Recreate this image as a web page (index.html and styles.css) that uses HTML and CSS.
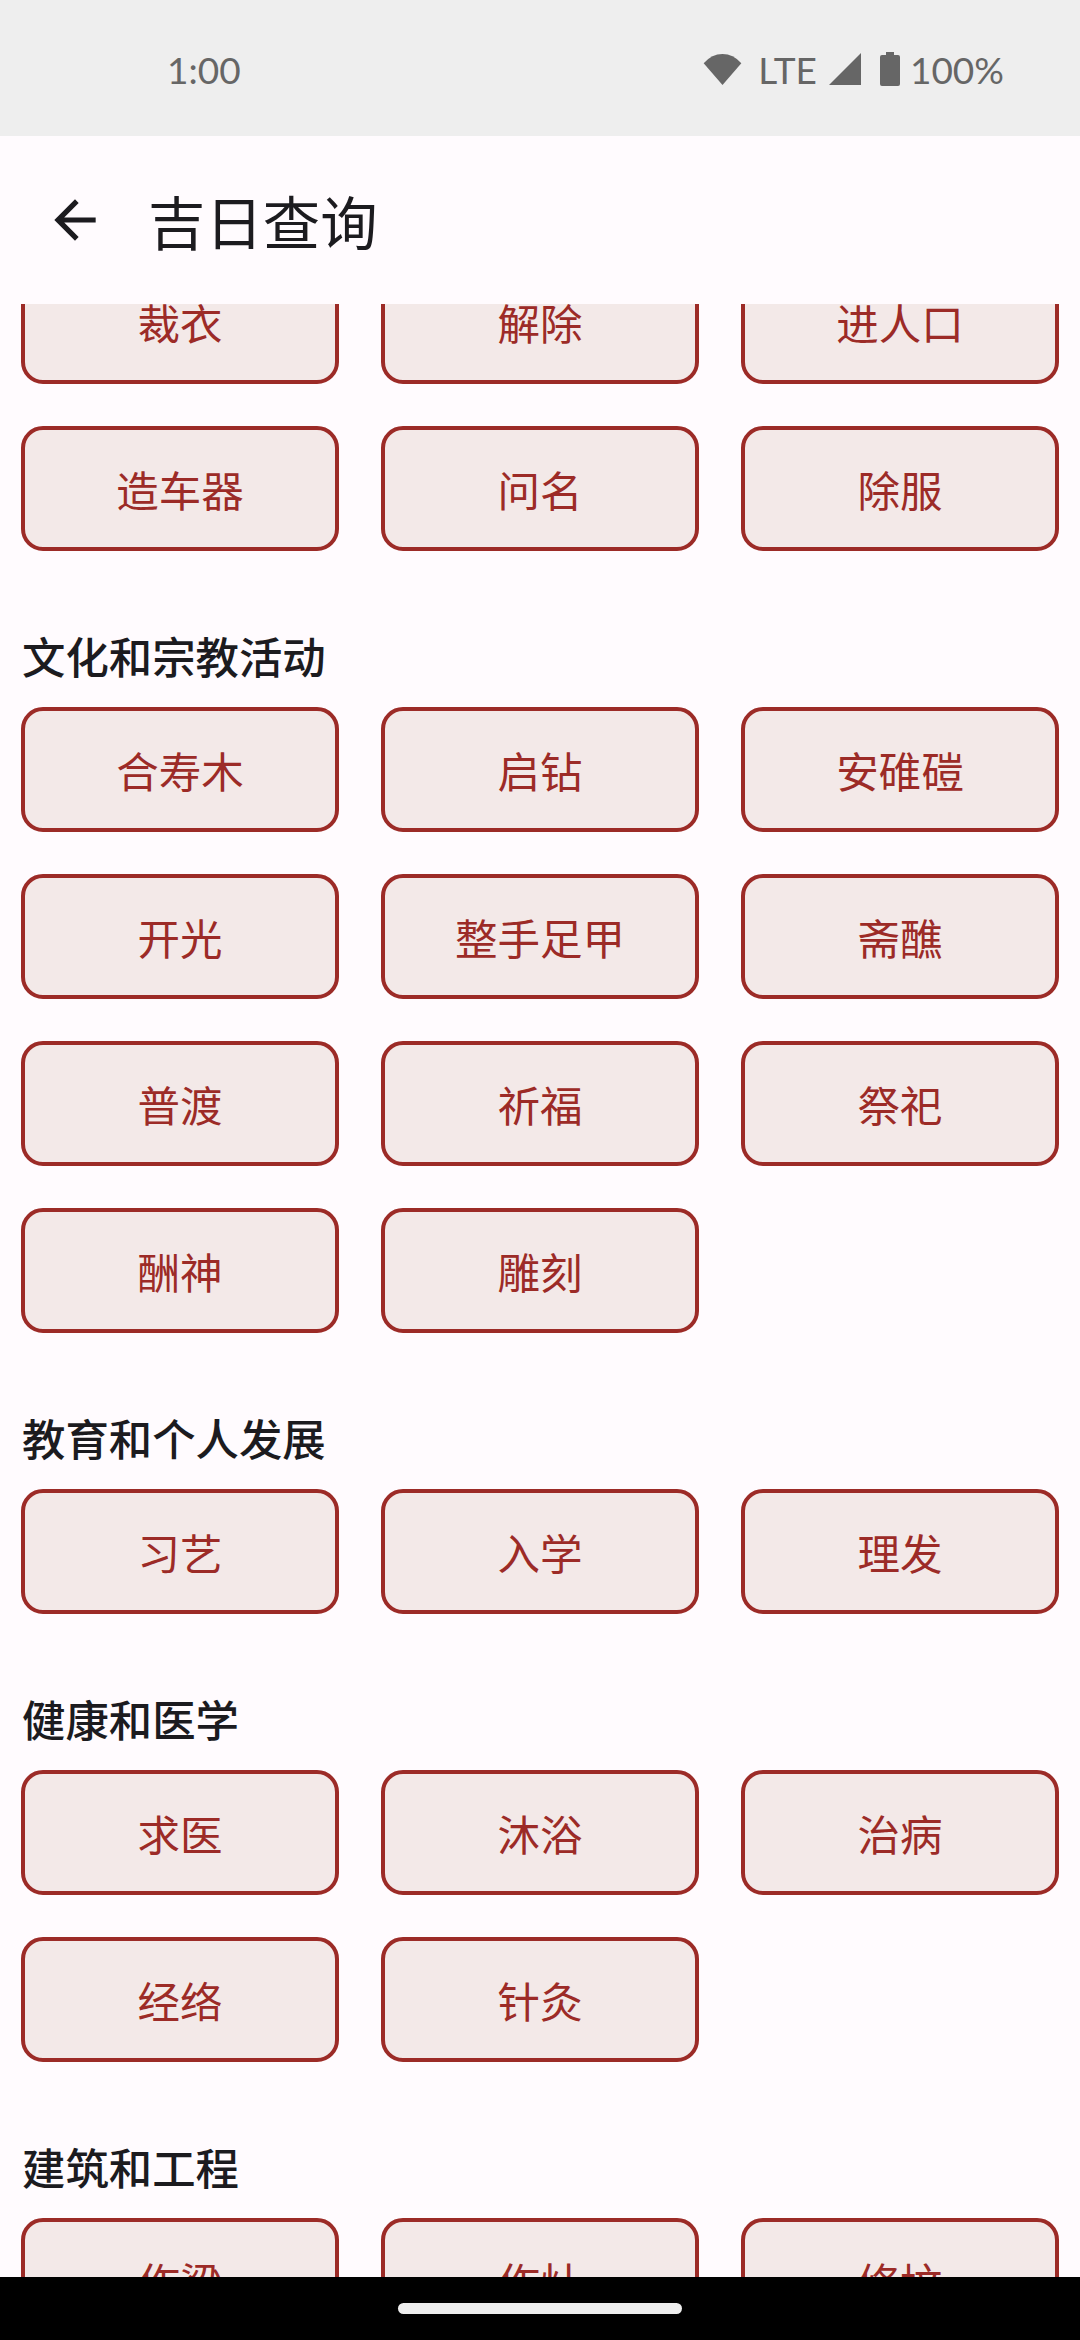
FILE: index.html
```html
<!DOCTYPE html>
<html lang="zh-CN">
<head>
  <meta charset="UTF-8" />
  <meta name="viewport" content="width=device-width, initial-scale=1.0"/>
  <title>吉日查询</title>
  <link rel="stylesheet" href="styles.css">
</head>
<body>

  <div class="status-bar">
    <span class="clock">1:00</span>
    <div class="status-icons">
      <svg class="wifi-icon" viewBox="0 0 40 34"><path d="M20 33 L0.6 10.5 Q9 1 20 1 Q31 1 39.4 10.5 Z"/></svg>
      <span class="lte">LTE</span>
      <svg class="signal-icon" viewBox="0 0 32 32"><path d="M32 0 V32 H0 Z"/></svg>
      <svg class="battery-icon" viewBox="0 0 20 34"><path d="M6 0 H14 V3 H18 Q20 3 20 5 V32 Q20 34 18 34 H2 Q0 34 0 32 V5 Q0 3 2 3 H6 Z"/></svg>
      <span class="percent">100%</span>
    </div>
  </div>

  <header class="app-bar">
    <svg class="back-icon" viewBox="0 0 24 24"><path d="M20 11H7.83l5.59-5.59L12 4l-8 8 8 8 1.41-1.41L7.83 13H20v-2z"/></svg>
    <h1>吉日查询</h1>
  </header>

  <main class="scroll-area">
    <div class="scroll-content">

      <section class="group">
        <div class="chips">
          <button class="chip">裁衣</button>
          <button class="chip">解除</button>
          <button class="chip">进人口</button>
          <button class="chip">造车器</button>
          <button class="chip">问名</button>
          <button class="chip">除服</button>
        </div>
      </section>

      <section class="group">
        <h2>文化和宗教活动</h2>
        <div class="chips">
          <button class="chip">合寿木</button>
          <button class="chip">启钻</button>
          <button class="chip">安碓磑</button>
          <button class="chip">开光</button>
          <button class="chip">整手足甲</button>
          <button class="chip">斋醮</button>
          <button class="chip">普渡</button>
          <button class="chip">祈福</button>
          <button class="chip">祭祀</button>
          <button class="chip">酬神</button>
          <button class="chip">雕刻</button>
        </div>
      </section>

      <section class="group">
        <h2>教育和个人发展</h2>
        <div class="chips">
          <button class="chip">习艺</button>
          <button class="chip">入学</button>
          <button class="chip">理发</button>
        </div>
      </section>

      <section class="group">
        <h2>健康和医学</h2>
        <div class="chips">
          <button class="chip">求医</button>
          <button class="chip">沐浴</button>
          <button class="chip">治病</button>
          <button class="chip">经络</button>
          <button class="chip">针灸</button>
        </div>
      </section>

      <section class="group">
        <h2>建筑和工程</h2>
        <div class="chips">
          <button class="chip">作梁</button>
          <button class="chip">作灶</button>
          <button class="chip">修坟</button>
        </div>
      </section>

    </div>
  </main>

  <div class="nav-bar">
    <div class="nav-handle"></div>
  </div>

</body>
</html>
```

FILE: styles.css
```css
* {
  box-sizing: border-box;
}

html, body {
  margin: 0;
  height: 2340px;
}

body {
  display: flex;
  flex-direction: column;
  overflow: hidden;
  font-family: "Noto Sans CJK SC", "Noto Sans", sans-serif;
  background-color: #fffbfe;
}

.status-bar {
  flex: 0 0 136px;
  display: flex;
  align-items: center;
  justify-content: space-between;
  padding: 2px 76px 0 167px;
  background-color: #eeeeee;
  color: #666666;
  font-family: Lato, Roboto, sans-serif;
  font-size: 37px;
}

.status-icons {
  display: flex;
  align-items: center;
}

.status-icons svg {
  display: block;
  fill: #666666;
}

.wifi-icon {
  width: 39px;
  height: 33px;
}

.lte {
  margin-left: 16px;
}

.signal-icon {
  width: 32px;
  height: 32px;
  margin-left: 12px;
}

.battery-icon {
  width: 20px;
  height: 34px;
  margin-left: 19px;
}

.percent {
  margin-left: 10px;
}

.app-bar {
  flex: 0 0 168px;
  display: flex;
  align-items: center;
  padding-left: 44px;
  color: #1c1b1f;
}

.back-icon {
  width: 62px;
  height: 62px;
  fill: #1c1b1f;
}

.app-bar h1 {
  margin: 0 0 0 42px;
  font-size: 57.4px;
  font-weight: 400;
}

.scroll-area {
  flex: 1;
  overflow: hidden;
}

/* list is scrolled down a little in the screenshot */
.scroll-content {
  margin-top: -45px;
  padding: 0 21px;
}

.group h2 {
  margin: 0;
  height: 114px;
  padding: 9px 0 0 1px;
  display: flex;
  align-items: center;
  font-size: 43.4px;
  font-weight: 500;
  color: #1c1b1f;
}

.group + .group {
  margin-top: 42px;
}

.chips {
  display: grid;
  grid-template-columns: repeat(3, 318px);
  gap: 42px;
}

.chip {
  height: 125px;
  padding: 0;
  border: 4px solid #9c2b27;
  border-radius: 22px;
  background-color: #f3e9e8;
  color: #9c2b27;
  font-family: inherit;
  font-size: 42.5px;
}

.nav-bar {
  flex: 0 0 63px;
  position: relative;
  z-index: 1;
  display: flex;
  justify-content: center;
  padding-top: 26px;
  background-color: #000000;
}

.nav-handle {
  width: 284px;
  height: 11px;
  border-radius: 6px;
  background-color: #eeeeee;
}
```
